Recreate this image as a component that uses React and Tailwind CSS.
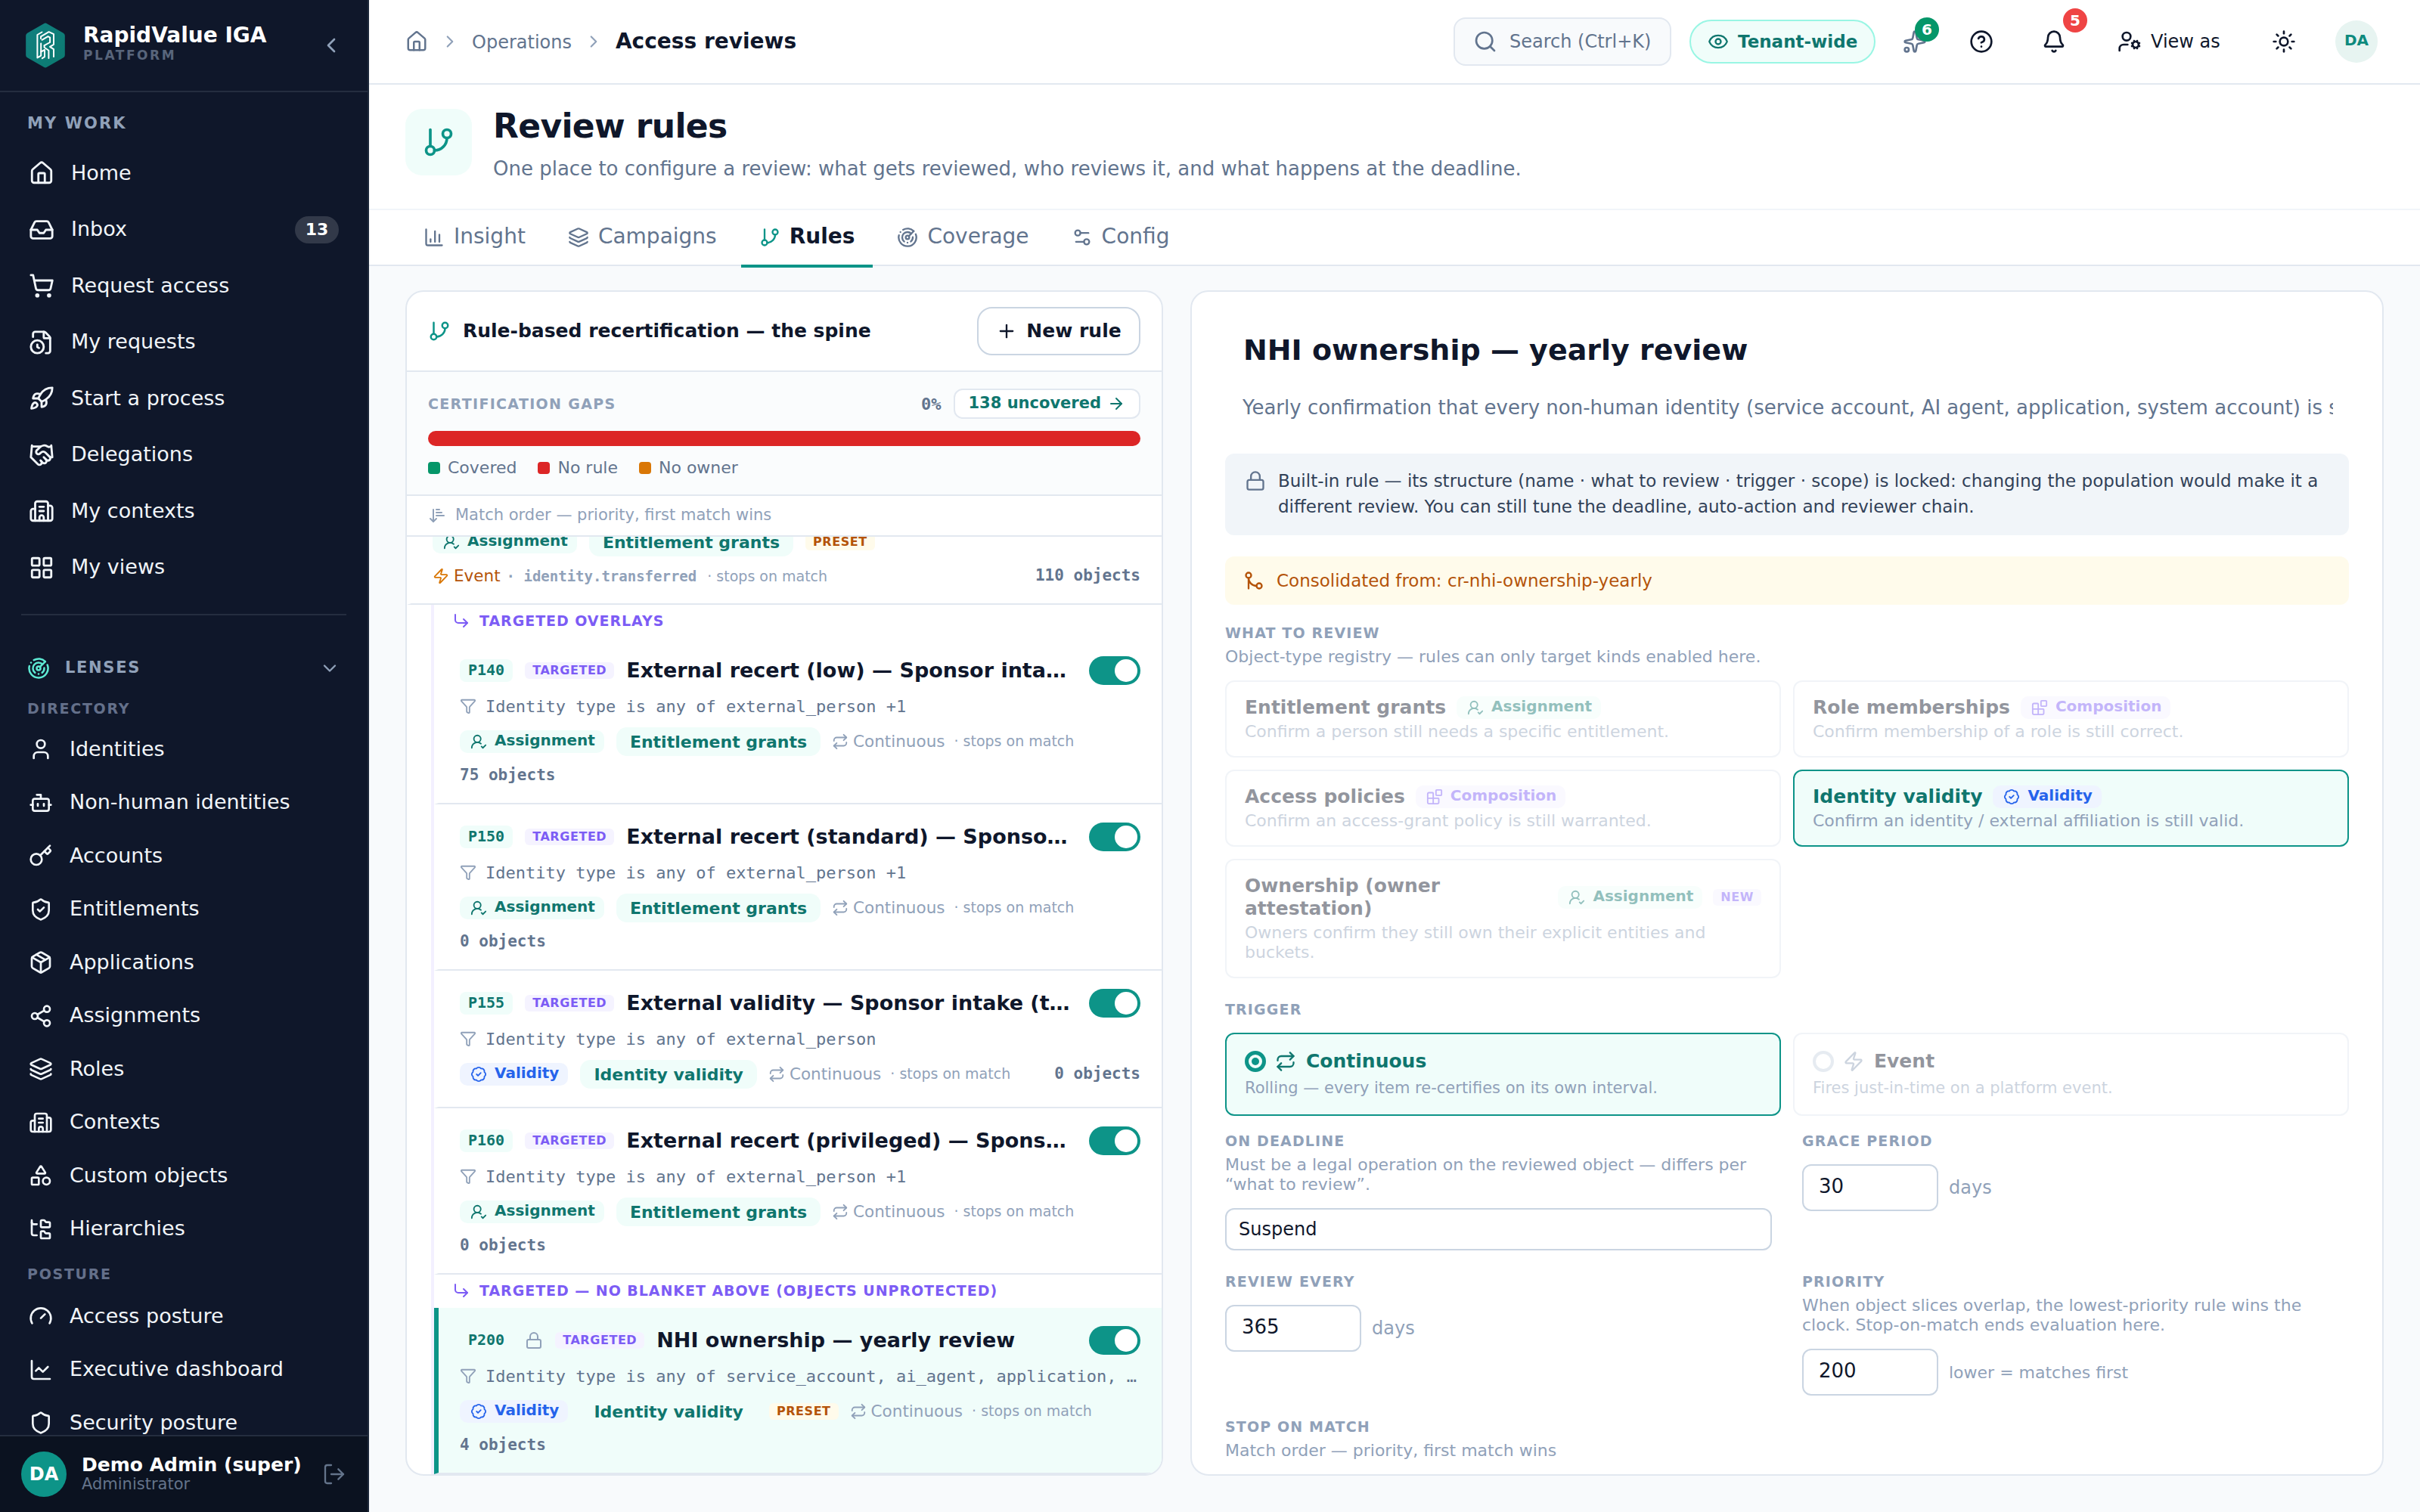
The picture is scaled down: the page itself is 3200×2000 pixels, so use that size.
import React, { useState } from "react";
import {
  ArrowDownNarrowWide,
  ArrowRight,
  BadgeCheck,
  Bell,
  Blocks,
  Bot,
  Building2,
  ChartColumn,
  ChartLine,
  ChevronDown,
  ChevronLeft,
  ChevronRight,
  CircleQuestionMark,
  CornerDownRight,
  Eye,
  FileClock,
  FolderTree,
  Funnel,
  Gauge,
  GitBranch,
  GitMerge,
  Handshake,
  House,
  Inbox,
  Key,
  Layers,
  LayoutGrid,
  Lock,
  LogOut,
  Package,
  Plus,
  Radar,
  Repeat,
  Rocket,
  Search,
  Settings2,
  Shapes,
  Share2,
  Shield,
  ShieldCheck,
  ShoppingCart,
  Sparkles,
  Sun,
  User,
  UserCog,
  UserRoundCheck,
  Zap,
} from "lucide-react";

const myWork = [
  { label: "Home", icon: House },
  { label: "Inbox", icon: Inbox, badge: 13 },
  { label: "Request access", icon: ShoppingCart },
  { label: "My requests", icon: FileClock },
  { label: "Start a process", icon: Rocket },
  { label: "Delegations", icon: Handshake },
  { label: "My contexts", icon: Building2 },
  { label: "My views", icon: LayoutGrid },
];

const directory = [
  { label: "Identities", icon: User },
  { label: "Non-human identities", icon: Bot },
  { label: "Accounts", icon: Key },
  { label: "Entitlements", icon: ShieldCheck },
  { label: "Applications", icon: Package },
  { label: "Assignments", icon: Share2 },
  { label: "Roles", icon: Layers },
  { label: "Contexts", icon: Building2 },
  { label: "Custom objects", icon: Shapes },
  { label: "Hierarchies", icon: FolderTree },
];

const posture = [
  { label: "Access posture", icon: Gauge },
  { label: "Executive dashboard", icon: ChartLine },
  { label: "Security posture", icon: Shield },
];

const tabs = [
  { label: "Insight", icon: ChartColumn },
  { label: "Campaigns", icon: Layers },
  { label: "Rules", icon: GitBranch },
  { label: "Coverage", icon: Radar },
  { label: "Config", icon: Settings2 },
];

const overlays = [
  {
    id: "P140",
    name: "External recert (low) — Sponsor intake (time-boxed)",
    filter: "Identity type is any of external_person +1",
    kind: "assignment",
    object: "Entitlement grants",
    count: "75 objects",
  },
  {
    id: "P150",
    name: "External recert (standard) — Sponsor intake (time-boxed)",
    filter: "Identity type is any of external_person +1",
    kind: "assignment",
    object: "Entitlement grants",
    count: "0 objects",
  },
  {
    id: "P155",
    name: "External validity — Sponsor intake (time-boxed)",
    filter: "Identity type is any of external_person",
    kind: "validity",
    object: "Identity validity",
    count: "0 objects",
  },
  {
    id: "P160",
    name: "External recert (privileged) — Sponsor intake (time-boxed)",
    filter: "Identity type is any of external_person +1",
    kind: "assignment",
    object: "Entitlement grants",
    count: "0 objects",
  },
];

const unprotected = [
  {
    id: "P200",
    name: "NHI ownership — yearly review",
    filter: "Identity type is any of service_account, ai_agent, application, system_account",
    kind: "validity",
    object: "Identity validity",
    count: "4 objects",
    locked: true,
    preset: true,
  },
];

const objectTypes = [
  { title: "Entitlement grants", kind: "assignment", text: "Confirm a person still needs a specific entitlement." },
  { title: "Role memberships", kind: "composition", text: "Confirm membership of a role is still correct." },
  { title: "Access policies", kind: "composition", text: "Confirm an access-grant policy is still warranted." },
  { title: "Identity validity", kind: "validity", text: "Confirm an identity / external affiliation is still valid." },
  {
    title: "Ownership (owner attestation)",
    kind: "assignment",
    text: "Owners confirm they still own their explicit entities and buckets.",
    isNew: true,
  },
];

const kinds = {
  assignment: { label: "Assignment", icon: UserRoundCheck, style: "bg-teal-50 text-[#0f766e]" },
  validity: { label: "Validity", icon: BadgeCheck, style: "bg-[#eff4ff] text-[#2563eb]" },
  composition: { label: "Composition", icon: Blocks, style: "bg-[#f5f3ff] text-[#7c5cf5]" },
};

const Logo = () => (
  <svg width="52" height="60" viewBox="0 0 52 60" fill="none" className="shrink-0">
    <defs>
      <linearGradient id="hex" x1="0" y1="0" x2="1" y2="1">
        <stop offset="0" stopColor="#128080" />
        <stop offset="1" stopColor="#0b7a70" />
      </linearGradient>
    </defs>
    <path
      d="M24 1.2a4 4 0 0 1 4 0l21.8 12.5a4 4 0 0 1 2 3.4v25.8a4 4 0 0 1-2 3.4L28 58.8a4 4 0 0 1-4 0L2.2 46.3a4 4 0 0 1-2-3.4V17.1a4 4 0 0 1 2-3.4z"
      fill="url(#hex)"
    />
    <g stroke="#fff" strokeWidth="2" strokeLinecap="round" strokeLinejoin="round">
      <path d="M21.5 12.5 15.4 16v30.4l4.8-2.8V27.5" />
      <path d="M20 21v-2.6L30.6 12.2l6.4 3v13.6l-5 3 5 3.4V45" />
      <path d="M21.5 22.8 29.5 18.2l2.6 1.4v6.4L24.6 30.2" />
      <path d="M24.6 30.2v2.6l5.8 4V47" />
      <path d="M20.2 38.5l4.8-2.6v9.2l-3.2 2" />
    </g>
  </svg>
);

const NavItem = ({ item, small }) => {
  const Icon = item.icon;
  return (
    <a
      className={`flex shrink-0 items-center gap-[22px] px-[22px] text-[27px] text-slate-100 ${
        small ? "h-[68.5px]" : "h-[72.5px]"
      }`}
    >
      <Icon size={small ? 32 : 34} className="shrink-0" />
      <span className="-mt-px flex-1 whitespace-nowrap">{item.label}</span>
      {item.badge && (
        <span className="flex h-9 w-[58px] items-center justify-center rounded-full bg-white/15 text-[22px] font-bold text-white">
          {item.badge}
        </span>
      )}
    </a>
  );
};

const GroupLabel = ({ children }) => (
  <div className="flex h-[36px] shrink-0 items-center px-5 text-[19px] font-bold tracking-[0.09em] text-[#64708a]">
    {children}
  </div>
);

const Sidebar = () => (
  <aside className="flex h-full w-[488px] shrink-0 flex-col border-r-2 border-[#1e293b] bg-[#0f172a]">
    <div className="flex h-[122px] shrink-0 items-center border-b-2 border-[#242d3f] pr-8 pl-[34px]">
      <Logo />
      <div className="-mt-1 ml-[24px] flex-1">
        <div className="text-[28px] leading-[30px] font-bold text-white">RapidValue IGA</div>
        <div className="text-[17px] leading-[22px] font-bold tracking-[0.15em] text-[#58657b]">PLATFORM</div>
      </div>
      <ChevronLeft size={32} className="text-slate-400" />
    </div>

    <div className="flex min-h-0 flex-1 flex-col overflow-hidden px-4">
      <div className="mt-[28px] flex h-7 shrink-0 items-center px-5 text-[21px] font-bold tracking-[0.1em] text-slate-400">
        MY WORK
      </div>
      <nav className="mt-[15px] flex flex-col gap-[2px]">
        {myWork.map((item) => (
          <NavItem key={item.label} item={item} />
        ))}
      </nav>
      <div className="mx-3 mt-[25px] h-[2px] shrink-0 bg-[#242d3f]" />
      <div className="mt-[52px] flex h-9 shrink-0 items-center px-5">
        <Radar size={30} className="text-[#5eead4]" />
        <span className="ml-5 flex-1 text-[21px] font-bold tracking-[0.08em] text-slate-400">LENSES</span>
        <ChevronDown size={28} className="text-slate-400" />
      </div>
      <div className="h-[17px] shrink-0" />
      <GroupLabel>DIRECTORY</GroupLabel>
      <nav className="mt-[2px] flex flex-col gap-[2px]">
        {directory.map((item) => (
          <NavItem key={item.label} item={item} small />
        ))}
      </nav>
      <div className="h-[7px] shrink-0" />
      <GroupLabel>POSTURE</GroupLabel>
      <nav className="mt-[4px] flex flex-col gap-[2px]">
        {posture.map((item) => (
          <NavItem key={item.label} item={item} small />
        ))}
      </nav>
    </div>

    <div className="flex h-[102px] shrink-0 items-center border-t-2 border-[#242d3f] bg-[#0b1220] px-7">
      <div className="flex h-[60px] w-[60px] items-center justify-center rounded-full bg-[#0d9488] text-[24px] font-bold text-white">
        DA
      </div>
      <div className="-mt-[2px] ml-5 flex-1">
        <div className="text-[25px] leading-[27px] font-bold whitespace-nowrap text-white">Demo Admin (super)</div>
        <div className="text-[21px] leading-[24px] text-[#64748b]">Administrator</div>
      </div>
      <LogOut size={32} className="text-[#64748b]" strokeWidth={1.75} />
    </div>
  </aside>
);

const Topbar = () => (
  <header className="flex h-[112px] shrink-0 items-center border-b-2 border-slate-200 bg-white pr-14 pl-12">
    <div className="flex flex-1 items-center gap-4">
      <House size={30} className="text-slate-500" />
      <ChevronRight size={26} className="text-slate-400" />
      <span className="mt-px text-[24px] text-slate-500">Operations</span>
      <ChevronRight size={26} className="text-slate-400" />
      <span className="text-[28px] font-bold text-slate-900">Access reviews</span>
    </div>
    <button className="flex h-16 w-[288px] items-center gap-4 rounded-2xl border-2 border-slate-200 bg-slate-50 px-6 text-[24px] whitespace-nowrap text-slate-500">
      <Search size={32} />
      Search (Ctrl+K)
    </button>
    <button className="ml-6 flex h-[58px] w-[246px] items-center gap-3 rounded-full border-2 border-[#99f6e4] bg-teal-50 pl-[22px] text-[23px] font-bold whitespace-nowrap text-[#0f766e]">
      <Eye size={28} />
      Tenant-wide
    </button>
    <button className="relative ml-5 flex h-16 w-16 items-center justify-center text-slate-500">
      <Sparkles size={32} />
      <span className="absolute top-0 right-0 flex h-8 w-8 items-center justify-center rounded-full bg-[#059669] text-[20px] font-bold text-white">
        6
      </span>
    </button>
    <button className="ml-6 flex h-16 w-16 items-center justify-center text-slate-900">
      <CircleQuestionMark size={32} />
    </button>
    <button className="relative ml-8 flex h-16 w-16 items-center justify-center text-slate-900">
      <Bell size={32} />
      <span className="absolute -top-3 -right-3 flex h-8 w-8 items-center justify-center rounded-full bg-[#ef4444] text-[20px] font-bold text-white">
        5
      </span>
    </button>
    <button className="ml-7 flex h-16 w-[184px] items-center gap-3 px-6 text-[24px] whitespace-nowrap text-slate-900">
      <UserCog size={32} className="shrink-0" />
      View as
    </button>
    <button className="ml-7 flex h-16 w-16 items-center justify-center text-slate-900">
      <Sun size={32} />
    </button>
    <div className="ml-9 flex h-14 w-14 items-center justify-center rounded-full bg-[#e7f4f1] pb-1 text-[20px] font-bold text-[#0d8a7d]">
      DA
    </div>
  </header>
);

const KindBadge = ({ kind }) => {
  const { label, icon: Icon, style } = kinds[kind];
  return (
    <span
      className={`flex h-[30px] shrink-0 items-center gap-[10px] rounded-[10px] pr-3 pl-[14px] text-[20px] font-bold ${style}`}
    >
      <Icon size={22} />
      <span className="-mt-1">{label}</span>
    </span>
  );
};

const MiniTag = ({ children, amber }) => (
  <span
    className={`flex h-[22px] shrink-0 items-center rounded-md px-[10px] text-[16px] font-bold tracking-[0.035em] ${
      amber ? "bg-amber-50 text-[#b45309]" : "bg-[#f5f3ff] text-[#7c5cf5]"
    }`}
  >
    {children}
  </span>
);

const ObjectTag = ({ children }) => (
  <span className="flex h-[38px] shrink-0 items-center rounded-[14px] bg-teal-50 px-[18px] text-[22px] font-bold text-[#0f766e]">
    {children}
  </span>
);

const Toggle = ({ on, onClick }) => (
  <button
    onClick={onClick}
    className={`flex h-[38px] w-[68px] shrink-0 items-center rounded-full p-1 ${
      on ? "justify-end bg-[#0d9488]" : "justify-start bg-slate-300"
    }`}
  >
    <span className="h-[30px] w-[30px] rounded-full bg-white" />
  </button>
);

const Count = ({ children }) => (
  <span className="ml-auto flex h-[26px] items-center font-['DejaVu_Sans_Mono',monospace] text-[21px] font-bold whitespace-nowrap text-slate-500">
    {children}
  </span>
);

const RuleItem = ({ rule, selected, onSelect }) => {
  const [on, setOn] = useState(true);
  const oneLine = rule.kind === "validity" && !rule.preset;
  return (
    <div
      onClick={onSelect}
      className={`border-b-2 border-l-[6px] border-b-slate-200 px-7 pt-6 ${oneLine ? "pb-6" : "pb-[23px]"} ${
        selected ? "border-l-[#0d9488] bg-teal-50" : "border-l-transparent"
      }`}
    >
      <div className="flex h-[38px] items-center gap-4">
        <span className="flex h-[30px] shrink-0 items-center rounded-lg bg-teal-50 px-[11px] pb-[2px] font-['DejaVu_Sans_Mono',monospace] text-[20px] font-bold text-[#0f766e]">
          {rule.id}
        </span>
        {rule.locked && <Lock size={24} className="shrink-0 text-slate-400" />}
        <MiniTag>TARGETED</MiniTag>
        <span className="mr-1 min-w-0 flex-1 truncate text-[27px] font-bold text-slate-900">{rule.name}</span>
        <Toggle on={on} onClick={() => setOn(!on)} />
      </div>
      <div className="mt-[12px] flex h-8 items-center gap-3">
        <Funnel size={22} className="shrink-0 text-slate-400" />
        <span className="truncate font-['DejaVu_Sans_Mono',monospace] text-[22px] text-slate-500">{rule.filter}</span>
      </div>
      <div className="mt-[12px] flex items-center gap-4 whitespace-nowrap">
        <KindBadge kind={rule.kind} />
        <ObjectTag>{rule.object}</ObjectTag>
        {rule.preset && <MiniTag amber>PRESET</MiniTag>}
        <span className="-ml-px flex items-center gap-[6px] text-[21.5px] text-slate-400">
          <Repeat size={22} />
          Continuous
        </span>
        <span className="-mt-px -ml-[4px] text-[19px] text-slate-400">· stops on match</span>
        {oneLine && <Count>{rule.count}</Count>}
      </div>
      {!oneLine && (
        <div className="mt-[13px] flex justify-start">
          <span className="flex">
            <Count>{rule.count}</Count>
          </span>
        </div>
      )}
    </div>
  );
};

const OverlayLabel = ({ children }) => (
  <div className="flex h-11 items-center gap-3 pb-[2px] pl-6 text-[19px] font-bold tracking-[0.05em] text-[#7c5cf5]">
    <CornerDownRight size={24} />
    {children}
  </div>
);

const RuleList = () => {
  const [selected, setSelected] = useState("P200");
  return (
    <section className="flex w-[1002px] shrink-0 flex-col overflow-hidden rounded-3xl border-2 border-slate-200 bg-white">
      <div className="flex h-[106px] shrink-0 items-center border-b-2 border-slate-200 px-7">
        <GitBranch size={30} className="text-[#0d9488]" />
        <h2 className="ml-4 flex-1 text-[25px] font-bold text-slate-900">Rule-based recertification — the spine</h2>
        <button className="flex h-16 w-[216px] items-center justify-center gap-3 rounded-[20px] border-2 border-slate-300 bg-white text-[25px] font-bold whitespace-nowrap text-slate-900">
          <Plus size={28} />
          New rule
        </button>
      </div>

      <div className="h-[164px] shrink-0 border-b-2 border-slate-200 bg-[#fafcfd] px-7 pt-[22px]">
        <div className="flex h-10 items-center">
          <span className="flex-1 text-[19px] font-bold tracking-[0.07em] text-slate-400">CERTIFICATION GAPS</span>
          <span className="font-['DejaVu_Sans_Mono',monospace] text-[22px] font-bold text-slate-500">0%</span>
          <button className="ml-4 flex h-10 items-center gap-2 rounded-xl border-2 border-slate-200 bg-white px-[18px] text-[21px] font-bold text-[#0f766e]">
            138 uncovered
            <ArrowRight size={24} />
          </button>
        </div>
        <div className="mt-4 h-5 rounded-full bg-[#dc2626]" />
        <div className="mt-[14px] flex h-[30px] items-center gap-7 text-[22px] text-slate-500">
          <span className="flex items-center gap-[10px]">
            <i className="h-4 w-4 rounded bg-[#059669]" />
            <span className="-mt-[2px]">Covered</span>
          </span>
          <span className="flex items-center gap-[10px]">
            <i className="h-4 w-4 rounded bg-[#dc2626]" />
            <span className="-mt-[2px]">No rule</span>
          </span>
          <span className="flex items-center gap-[10px]">
            <i className="h-4 w-4 rounded bg-[#d97706]" />
            <span className="-mt-[2px]">No owner</span>
          </span>
        </div>
      </div>

      <div className="flex h-[54px] shrink-0 items-center gap-3 border-b-2 border-slate-200 px-7 text-[21px] text-slate-400">
        <ArrowDownNarrowWide size={24} />
        Match order — priority, first match wins
      </div>

      {/* scrolled to the end, so the first rule is cut by the header above */}
      <div className="flex min-h-0 flex-1 flex-col justify-end overflow-hidden">
        <div className="shrink-0 border-b-2 border-l-[6px] border-b-slate-200 border-l-transparent px-7 pb-[23px]">
          <div className="flex items-center gap-4">
            <KindBadge kind="assignment" />
            <ObjectTag>Entitlement grants</ObjectTag>
            <MiniTag amber>PRESET</MiniTag>
          </div>
          <div className="mt-[13px] flex h-[26px] items-center">
            <span className="flex items-center gap-[6px] text-[21.5px] text-[#b45309]">
              <Zap size={22} className="text-[#d97706]" />
              Event
            </span>
            <span className="ml-[8px] font-['DejaVu_Sans_Mono',monospace] text-[19px] font-bold text-slate-400">
              · identity.transferred
            </span>
            <span className="ml-[14px] text-[19px] text-slate-400">· stops on match</span>
            <Count>110 objects</Count>
          </div>
        </div>
        <div className="ml-8 shrink-0 border-l-4 border-[#f3f0ff]">
          <OverlayLabel>TARGETED OVERLAYS</OverlayLabel>
          {overlays.map((rule) => (
            <RuleItem
              key={rule.id}
              rule={rule}
              selected={selected === rule.id}
              onSelect={() => setSelected(rule.id)}
            />
          ))}
          <OverlayLabel>TARGETED — NO BLANKET ABOVE (OBJECTS UNPROTECTED)</OverlayLabel>
          {unprotected.map((rule) => (
            <RuleItem
              key={rule.id}
              rule={rule}
              selected={selected === rule.id}
              onSelect={() => setSelected(rule.id)}
            />
          ))}
        </div>
      </div>
    </section>
  );
};

const Label = ({ children }) => (
  <div className="text-[19px] leading-[22px] font-bold tracking-[0.06em] text-slate-400">{children}</div>
);

const Hint = ({ children }) => <p className="mt-2 text-[22px] leading-[26px] text-slate-400">{children}</p>;

const OptionCard = ({ active, children }) => (
  <div
    className={`rounded-xl border-2 px-6 pt-[19px] pb-[19px] ${
      active ? "border-[#0d9488] bg-teal-50" : "border-slate-200 bg-white opacity-45"
    }`}
  >
    {children}
  </div>
);

const NumberField = ({ value, suffix, small }) => (
  <div className="flex items-center gap-[14px]">
    <input
      defaultValue={value}
      className="h-[62px] w-[180px] rounded-xl border-2 border-slate-300 bg-white px-5 pb-1 text-[26px] text-slate-900"
    />
    <span className={`text-slate-400 ${small ? "text-[22px]" : "text-[24px]"}`}>{suffix}</span>
  </div>
);

const RuleEditor = () => (
  <section className="flex min-w-0 flex-1 flex-col overflow-hidden rounded-3xl border-2 border-slate-200 bg-white px-11">
    <h2 className="mt-[49px] px-6 text-[38px] leading-[56px] font-bold text-slate-900">
      NHI ownership — yearly review
    </h2>
    <div className="mt-[28px] mr-[21px] ml-[23px] h-10 overflow-hidden text-[26px] leading-10 whitespace-nowrap text-slate-500">
      Yearly confirmation that every non-human identity (service account, AI agent, application, system account) is
      still owned by an accountable person.
    </div>

    <div className="mt-[41px] flex h-[108px] shrink-0 gap-4 rounded-xl bg-slate-100 pt-[19px] pr-[22px] pl-[26px]">
      <Lock size={28} className="mt-[3px] shrink-0 text-slate-500" />
      <p className="text-[23px] leading-[34px] text-slate-700">
        Built-in rule — its structure (name · what to review · trigger · scope) is locked: changing the population would
        make it a different review. You can still tune the deadline, auto-action and reviewer chain.
      </p>
    </div>

    <div className="mt-7 flex h-16 shrink-0 items-center gap-4 rounded-xl bg-[#fffbeb] px-6 text-[23px] text-[#b45309]">
      <GitMerge size={28} />
      Consolidated from: cr-nhi-ownership-yearly
    </div>

    <div className="mt-[26px]">
      <Label>WHAT TO REVIEW</Label>
      <Hint>Object-type registry — rules can only target kinds enabled here.</Hint>
      <div className="mt-[18px] grid grid-cols-2 gap-4">
        {objectTypes.map((type) => {
          const active = type.title === "Identity validity";
          return (
            <OptionCard key={type.title} active={active}>
              <div className="flex min-h-[30px] items-center gap-[14px]">
                <span className={`text-[25px] leading-[30px] font-bold ${active ? "text-[#0f766e]" : "text-slate-900"}`}>
                  {type.title}
                </span>
                <KindBadge kind={type.kind} />
                {type.isNew && <MiniTag>NEW</MiniTag>}
              </div>
              <p className="mt-1 text-[22px] leading-[26px] text-slate-400">{type.text}</p>
            </OptionCard>
          );
        })}
      </div>
    </div>

    <div className="mt-[30px]">
      <Label>TRIGGER</Label>
      <div className="mt-5 grid grid-cols-2 gap-4">
        <OptionCard active>
          <div className="flex h-[34px] items-center gap-3 text-[25px] font-bold text-[#0f766e]">
            <span className="flex h-7 w-7 items-center justify-center rounded-full border-[5px] border-[#0d9488]">
              <i className="h-[10px] w-[10px] rounded-full bg-[#0d9488]" />
            </span>
            <Repeat size={28} />
            <span className="ml-px">Continuous</span>
          </div>
          <p className="mt-[5px] mb-[3px] text-[21px] leading-[26px] text-slate-400">
            Rolling — every item re-certifies on its own interval.
          </p>
        </OptionCard>
        <OptionCard>
          <div className="flex h-[34px] items-center gap-3 text-[25px] font-bold text-slate-900">
            <span className="h-7 w-7 rounded-full border-4 border-slate-300" />
            <Zap size={28} className="text-slate-400" />
            <span className="ml-px">Event</span>
          </div>
          <p className="mt-[5px] mb-[3px] text-[21px] leading-[26px] text-slate-400">
            Fires just-in-time on a platform event.
          </p>
        </OptionCard>
      </div>
    </div>

    <div className="mt-[22px] grid grid-cols-2 gap-x-10 gap-y-[30px]">
      <div>
        <Label>ON DEADLINE</Label>
        <Hint>Must be a legal operation on the reviewed object — differs per “what to review”.</Hint>
        <div className="mt-[18px] flex h-14 items-center rounded-xl border-2 border-slate-300 px-4 text-[24px] text-slate-900">
          Suspend
        </div>
      </div>
      <div>
        <Label>GRACE PERIOD</Label>
        <div className="mt-5">
          <NumberField value="30" suffix="days" />
        </div>
      </div>
      <div>
        <Label>REVIEW EVERY</Label>
        <div className="mt-5">
          <NumberField value="365" suffix="days" />
        </div>
      </div>
      <div>
        <Label>PRIORITY</Label>
        <Hint>When object slices overlap, the lowest-priority rule wins the clock. Stop-on-match ends evaluation here.</Hint>
        <div className="mt-[18px]">
          <NumberField value="200" suffix="lower = matches first" small />
        </div>
      </div>
      <div>
        <Label>STOP ON MATCH</Label>
        <Hint>Match order — priority, first match wins</Hint>
      </div>
    </div>
  </section>
);

const App = () => {
  const [tab, setTab] = useState("Rules");

  return (
    <div className="flex h-[2000px] w-[3200px] overflow-hidden bg-slate-50 font-['DejaVu_Sans',sans-serif]">
      <Sidebar />
      <div className="flex min-w-0 flex-1 flex-col">
        <Topbar />

        <div className="flex h-[166px] shrink-0 items-center gap-7 border-b-2 border-slate-100 bg-white px-12">
          <div className="-mt-[13px] flex h-[88px] w-[88px] items-center justify-center rounded-[22px] bg-teal-50">
            <GitBranch size={44} className="text-[#0d9488]" />
          </div>
          <div className="-mt-[4px]">
            <h1 className="text-[44px] leading-[52px] font-bold tracking-[-0.015em] text-slate-900">Review rules</h1>
            <p className="mt-[10px] text-[26px] leading-[40px] text-slate-500">
              One place to configure a review: what gets reviewed, who reviews it, and what happens at the deadline.
            </p>
          </div>
        </div>

        <nav className="flex h-[74px] shrink-0 gap-2 border-b-2 border-slate-200 bg-white px-12">
          {tabs.map(({ label, icon: Icon }) => {
            const active = label === tab;
            return (
              <button
                key={label}
                onClick={() => setTab(label)}
                className={`flex items-center gap-3 px-6 text-[28px] ${
                  active ? "-mb-1 border-b-4 border-[#0d9488] font-bold text-slate-900" : "text-slate-500"
                }`}
              >
                <Icon size={28} className={active ? "text-[#0d9488]" : ""} />
                <span className="-mt-[2px]">{label}</span>
              </button>
            );
          })}
        </nav>

        <main className="flex min-h-0 flex-1 gap-9 px-12 pt-8 pb-12">
          <RuleList />
          <RuleEditor />
        </main>
      </div>
    </div>
  );
};

export default App;
